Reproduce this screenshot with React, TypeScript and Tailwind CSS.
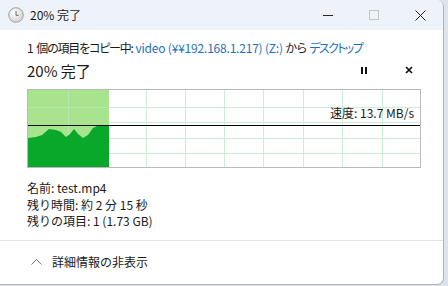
import React from "react";

const font = { fontFamily: '"Noto Sans CJK JP", "Noto Sans", sans-serif' };

function Chart() {
  const vx = [67, 106, 145, 184, 223, 262, 302, 341, 381].map((x) => x - 27);
  const hy = [106, 121, 137, 152].map((y) => y - 89);
  const area =
    "0,48 8,47 14,45 21,39 28,40 33,42 38,47 42,44 46,39 50,44 55,48 60,45 65,38 71,35 76,35 81,35 81,78 0,78";
  return (
    <div className="relative h-[79px] w-[394px] border border-[#b9b9b9] bg-white">
      <svg width="392" height="77" className="block">
        {vx.map((x) => (
          <line key={x} x1={x + 0.5} y1="0" x2={x + 0.5} y2="77" stroke="#cbeed8" strokeWidth="1" />
        ))}
        {hy.map((y) => (
          <line key={y} x1="0" y1={y + 0.5} x2="392" y2={y + 0.5} stroke="#cbeed8" strokeWidth="1" />
        ))}
        <rect x="0" y="0" width="81" height="77" fill="#a8e38e" />
        <line x1="40.5" y1="0" x2="40.5" y2="77" stroke="#b6e6b2" />
        <line x1="0" y1="17.5" x2="81" y2="17.5" stroke="#b6e6b2" />
        <polygon points={area} fill="#0aa82a" />
        <line x1="0" y1="35.5" x2="392" y2="35.5" stroke="#000" strokeWidth="1.2" />
      </svg>
      <span className="absolute right-[6px] top-[17px] text-[12px] leading-none text-[#1a1a1a]">
        速度: 13.7 MB/s
      </span>
    </div>
  );
}

export default function App() {
  return (
    <div className="h-[286px] w-[448px] bg-[#dfe4ea]" style={font}>
      <div className="flex h-[285px] w-[444px] flex-col overflow-hidden rounded-r-[7px] border-r border-b border-[#aab4c0] bg-white">
        <div className="flex h-[30px] items-center bg-[#eef3f9] pl-[8px]">
          <svg width="16" height="16" viewBox="0 0 16 16">
            <defs>
              <radialGradient id="g" cx="40%" cy="35%" r="70%">
                <stop offset="0%" stopColor="#ffffff" />
                <stop offset="100%" stopColor="#cfcfcf" />
              </radialGradient>
            </defs>
            <circle cx="8" cy="8" r="7.3" fill="url(#g)" stroke="#9a9a9a" strokeWidth="0.9" />
            <path d="M8 4v4.3h2.6" fill="none" stroke="#666" strokeWidth="1" />
          </svg>
          <span className="ml-[6px] text-[12px] text-[#1a1a1a]">20% 完了</span>
          <div className="ml-auto flex h-full items-center">
            <div className="flex h-full w-[46px] items-center justify-center">
              <div className="h-px w-[10px] bg-[#222]" />
            </div>
            <div className="flex h-full w-[46px] items-center justify-center">
              <div className="h-[10px] w-[10px] border border-[#c2c6cb]" />
            </div>
            <div className="flex h-full w-[46px] items-center justify-center">
              <svg width="11" height="11" viewBox="0 0 11 11">
                <path d="M0.5 0.5l10 10M10.5 0.5l-10 10" stroke="#222" strokeWidth="1" />
              </svg>
            </div>
          </div>
        </div>

        <div className="flex flex-1 flex-col px-[27px] text-[#1a1a1a]">
          <div className="mt-[10px] whitespace-nowrap text-[12px] leading-[16px] [font-feature-settings:'palt']">
            1 <span className="tracking-[-1.2px]">個の項目をコピー中:</span>{" "}
            <span className="tracking-[-0.2px] text-[#1f6fc0]">video (¥¥192.168.1.217) (Z:)</span>{" "}
            <span className="tracking-[-0.5px]">から</span>{" "}
            <span className="tracking-[-1.6px] text-[#1f6fc0]">デスクトップ</span>
          </div>
          <div className="mt-[4px] flex h-[20px] items-center">
            <span className="text-[15px] leading-none">20% 完了</span>
            <div className="ml-auto flex items-center">
              <div className="flex gap-[2px]">
                <div className="h-[7px] w-[2px] bg-[#111]" />
                <div className="h-[7px] w-[2px] bg-[#111]" />
              </div>
              <svg width="8" height="8" viewBox="0 0 8 8" className="ml-[38px] mr-[3px]">
                <path d="M1 1l6 6M7 1l-6 6" stroke="#111" strokeWidth="1.7" />
              </svg>
            </div>
          </div>
          <div className="mt-[9px]">
            <Chart />
          </div>
          <div className="mt-[12px] text-[12px] leading-[16.5px]">
            <div>名前: test.mp4</div>
            <div>残り時間: 約 2 分 15 秒</div>
            <div>残りの項目: 1 (1.73 GB)</div>
          </div>
        </div>

        <div className="mt-auto border-t border-[#e3e3e3]">
          <div className="flex h-[43px] items-center pl-[31px] pb-[2px]">
            <svg width="11" height="7" viewBox="0 0 11 7">
              <path d="M0.5 6.5L5.5 1.5L10.5 6.5" fill="none" stroke="#777" strokeWidth="1" />
            </svg>
            <span className="ml-[10px] text-[12px] text-[#1a1a1a]">詳細情報の非表示</span>
          </div>
        </div>
      </div>
    </div>
  );
}
